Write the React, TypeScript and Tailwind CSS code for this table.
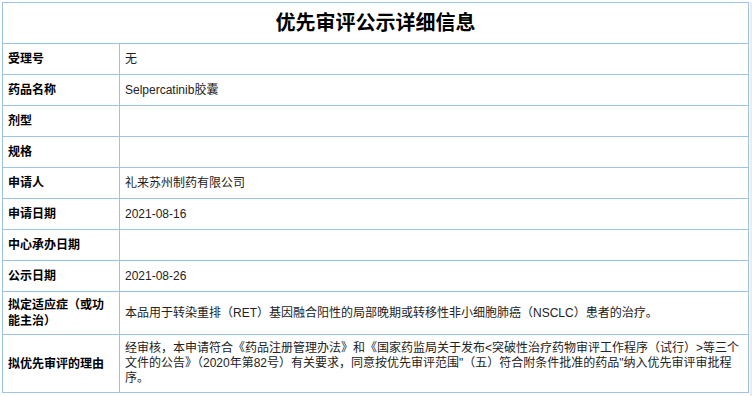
const rows: { label: string; value: string }[] = [
  { label: "受理号", value: "无" },
  { label: "药品名称", value: "Selpercatinib胶囊" },
  { label: "剂型", value: "" },
  { label: "规格", value: "" },
  { label: "申请人", value: "礼来苏州制药有限公司" },
  { label: "申请日期", value: "2021-08-16" },
  { label: "中心承办日期", value: "" },
  { label: "公示日期", value: "2021-08-26" },
  {
    label: "拟定适应症（或功能主治）",
    value: "本品用于转染重排（RET）基因融合阳性的局部晚期或转移性非小细胞肺癌（NSCLC）患者的治疗。",
  },
  {
    label: "拟优先审评的理由",
    value:
      "经审核，本申请符合《药品注册管理办法》和《国家药监局关于发布<突破性治疗药物审评工作程序（试行）>等三个文件的公告》（2020年第82号）有关要求，同意按优先审评范围\"（五）符合附条件批准的药品\"纳入优先审评审批程序。",
  },
];

export default function App() {
  return (
    <div
      className="flex h-[396px] w-[752px] bg-white pl-[2px] pt-[2px]"
      style={{ fontFamily: '"Liberation Sans", "Noto Sans CJK SC", sans-serif' }}
    >
      <div className="w-[747px] self-start border border-[#9dc3e6]">
        <div className="flex h-[41px] items-center justify-center border-b border-[#9dc3e6] text-[20px] font-bold text-black">
          优先审评公示详细信息
        </div>
        {rows.map((row, index) => (
          <div
            key={row.label}
            className={
              index === rows.length - 1
                ? "flex min-h-[30px]"
                : "flex min-h-[31px] border-b border-[#9dc3e6]"
            }
          >
            <div className="flex w-[117px] shrink-0 items-center border-r border-[#9dc3e6] px-[5px] py-[5px] text-[12px] font-bold leading-[16px] text-black">
              {row.label}
            </div>
            <div className="flex flex-1 items-center px-[5px] py-[6px] text-[12px] leading-[15px] text-[#222]">
              {row.value}
            </div>
          </div>
        ))}
      </div>
      <div className="ml-auto h-full w-[2px] bg-[#ececec]" />
    </div>
  );
}
